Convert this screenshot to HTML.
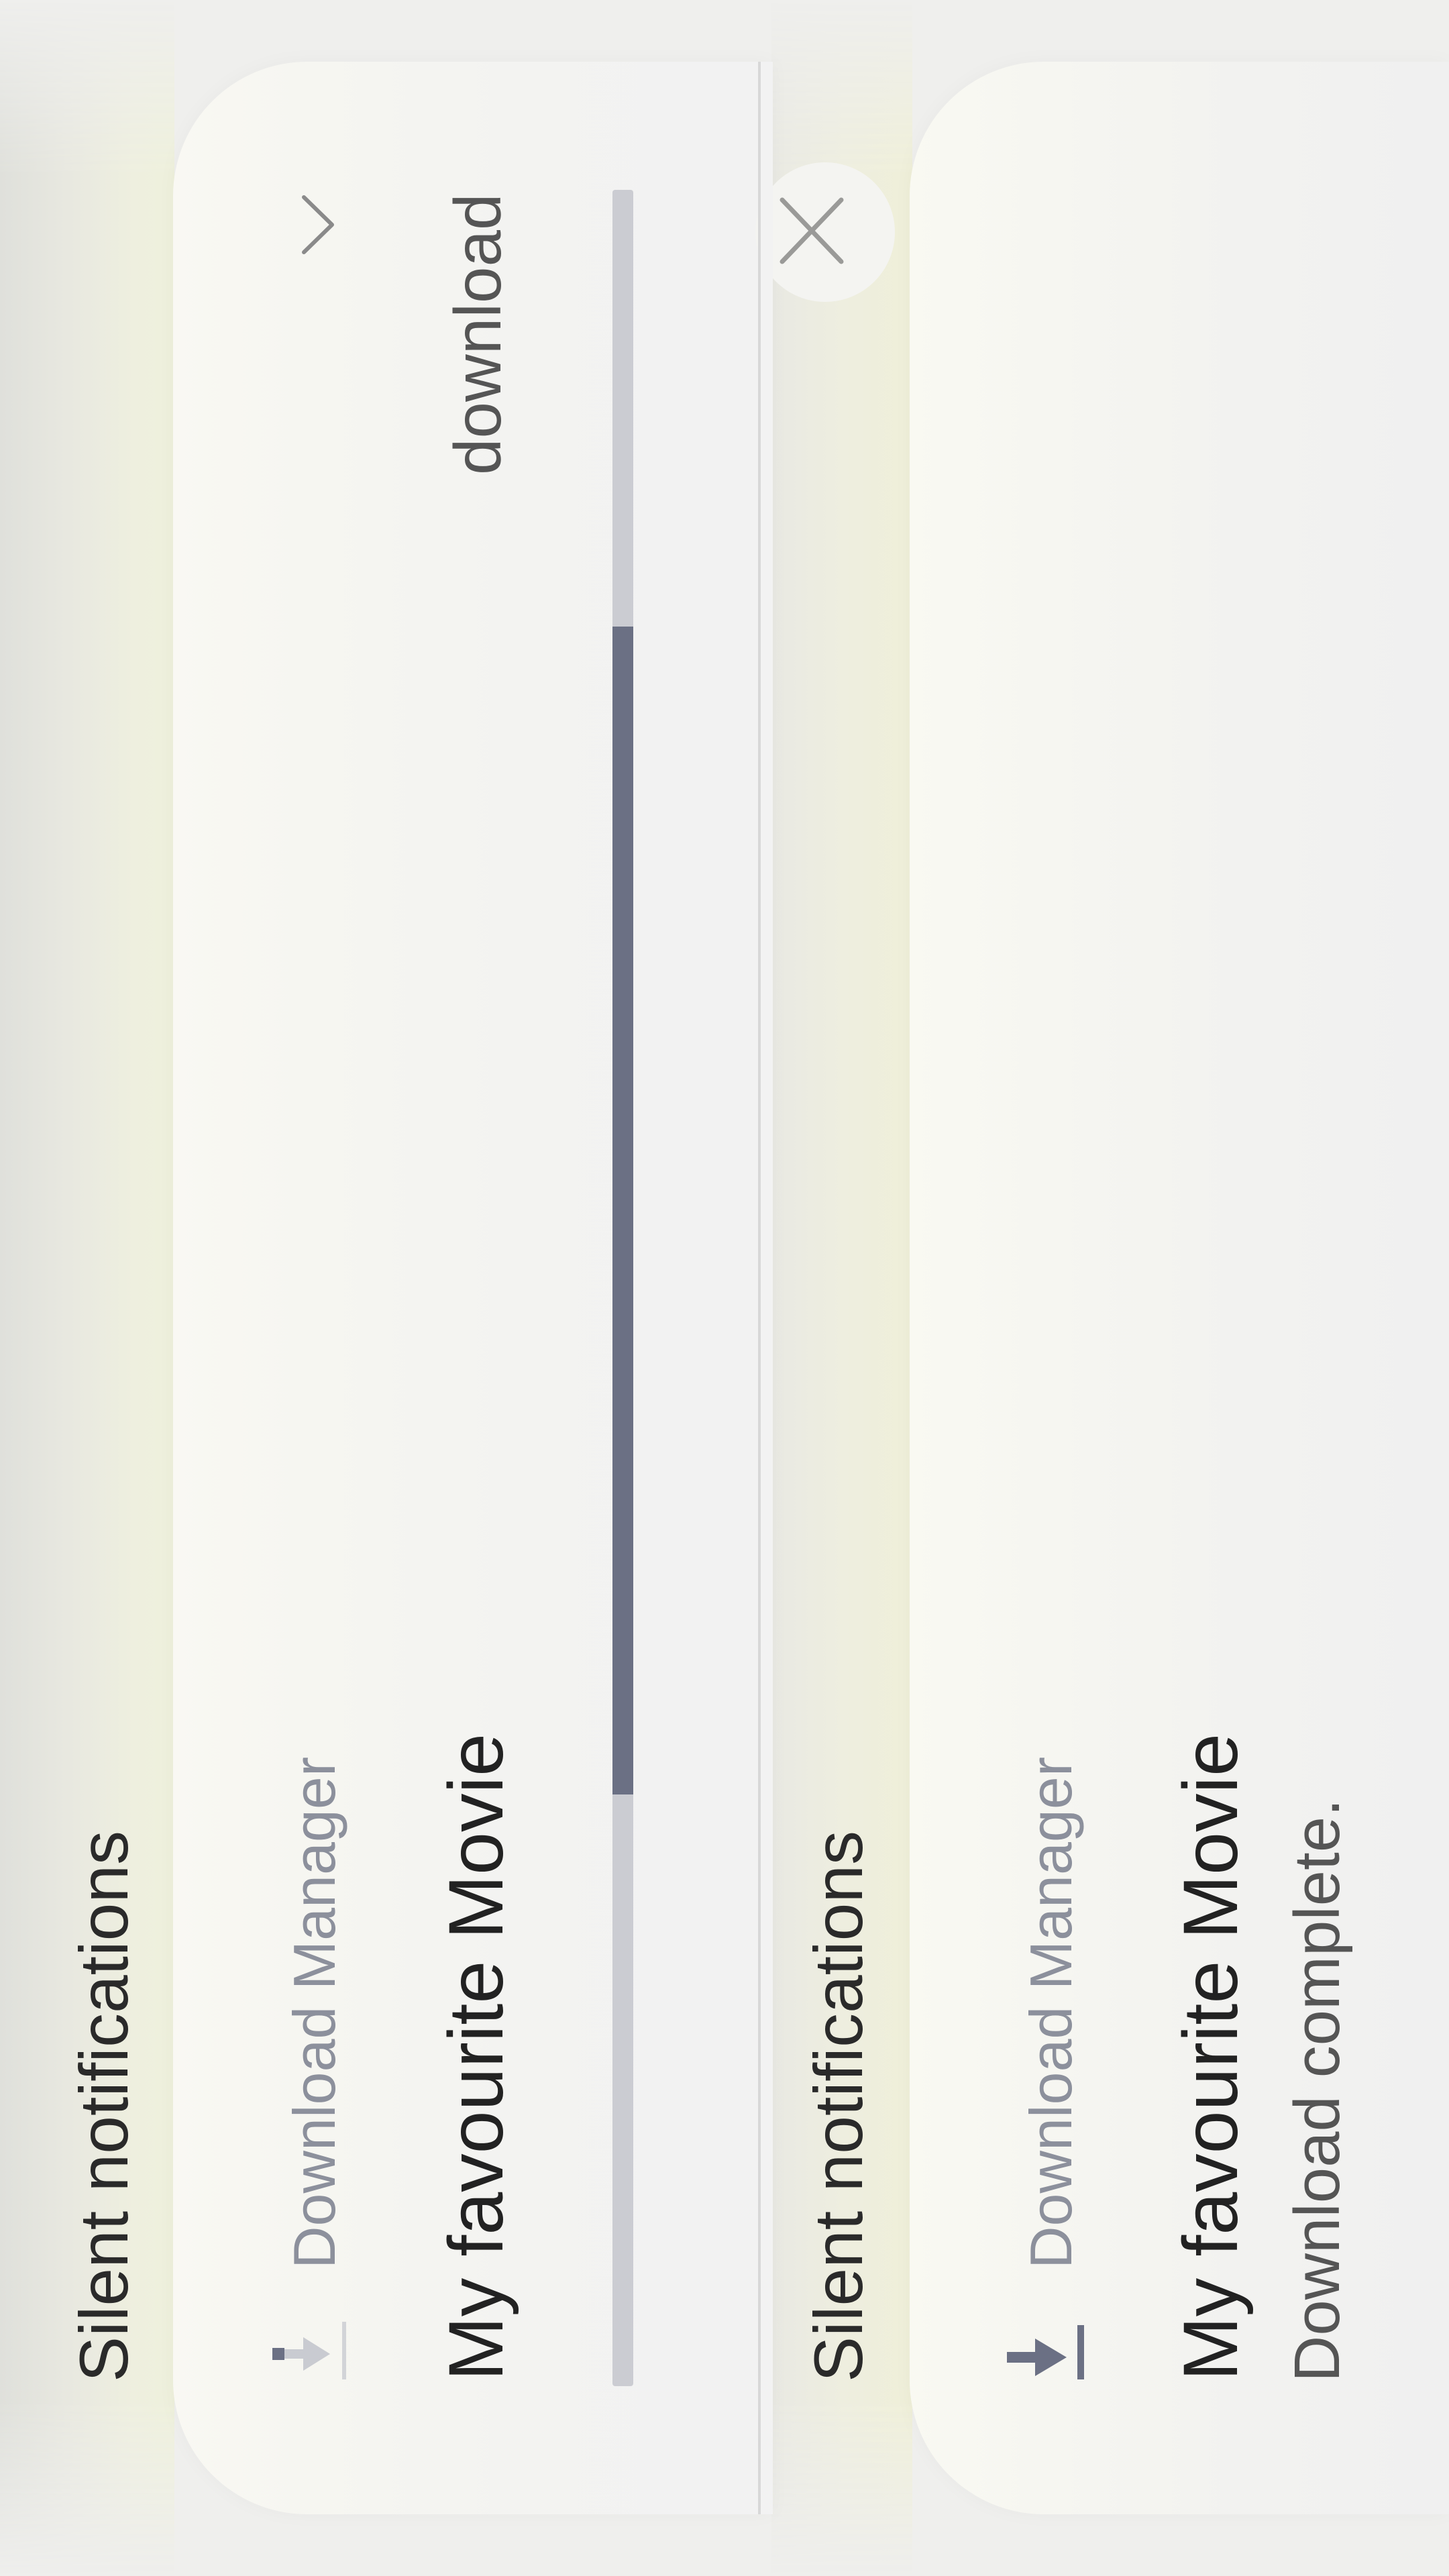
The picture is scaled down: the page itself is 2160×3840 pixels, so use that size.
<!DOCTYPE html>
<html><head><meta charset="utf-8"><style>
html,body{margin:0;padding:0;}
body{width:2160px;height:3840px;position:relative;overflow:hidden;background:#efefed;font-family:"Liberation Sans",sans-serif;}
.abs{position:absolute;}
.rt{position:absolute;transform:rotate(-90deg);transform-origin:left top;white-space:nowrap;line-height:1;}
</style></head><body>
<!-- background column strips -->
<div class="abs" style="left:0;top:0;width:260px;height:3840px;background:linear-gradient(90deg,#dfe0db 0,#e8e8e0 100px,#eeefdf 200px,#eef0dc 258px);-webkit-mask-image:linear-gradient(180deg,transparent 0,#000 260px,#000 3580px,transparent 3840px);mask-image:linear-gradient(180deg,transparent 0,#000 260px,#000 3580px,transparent 3840px);"></div>
<div class="abs" style="left:1150px;top:0;width:210px;height:3840px;background:linear-gradient(90deg,#e9e9e3 0,#eeeedf 110px,#efefd9 206px);-webkit-mask-image:linear-gradient(180deg,transparent 0,#000 260px,#000 3580px,transparent 3840px);mask-image:linear-gradient(180deg,transparent 0,#000 260px,#000 3580px,transparent 3840px);"></div>

<!-- card 1 -->
<div class="abs" style="left:258px;top:92px;width:894px;height:3656px;border-radius:200px 0 0 200px;background:linear-gradient(90deg,#f9f8f3 0,#f6f6f1 200px,#f3f3f1 500px,#f2f2f2 894px);box-shadow:0 0 30px rgba(0,0,0,0.03);"></div>

<!-- card 2 -->
<div class="abs" style="left:1356px;top:92px;width:804px;height:3656px;border-radius:200px 0 0 200px;background:linear-gradient(90deg,#f9f9f2 0,#f6f6f1 200px,#f2f2f0 500px,#f0f0f0 804px);box-shadow:0 0 30px rgba(0,0,0,0.03);"></div>

<!-- close button -->
<div class="abs" style="left:1126px;top:242px;width:208px;height:208px;border-radius:50%;background:#f4f4f1;"></div>
<div class="abs" style="left:1134px;top:92px;width:18px;height:3656px;background:#f2f2f2;"></div>
<div class="abs" style="left:1130px;top:92px;width:4px;height:3656px;background:#d8d8d8;"></div>
<svg class="abs" style="left:0;top:0" width="2160" height="3840">
  <path d="M1166 298 L1254 390 M1254 298 L1166 390" stroke="#9a9a98" stroke-width="7" fill="none" stroke-linecap="round"/>
  <path d="M453 294 L495 335 L453 376" stroke="#8a8a8a" stroke-width="6" fill="none" stroke-linecap="round" stroke-linejoin="round"/>
  <rect x="913" y="283" width="31" height="3274" rx="4" fill="#cbccd2"/>
  <rect x="913" y="934" width="31" height="1741" fill="#6b7084"/>
  <rect x="406" y="3500" width="18" height="18" fill="#6b7084"/>
  <rect x="424" y="3502" width="36" height="14" fill="#c9cbd1"/>
  <polygon points="452,3484 492,3509 452,3534" fill="#c9cbd1"/>
  <rect x="510" y="3461" width="6" height="86" fill="#d2d4d8"/>
  <rect x="1501" y="3506" width="50" height="16" fill="#6b7084"/>
  <polygon points="1543,3486 1590,3514 1543,3542" fill="#6b7084"/>
  <rect x="1606" y="3466" width="10" height="81" fill="#6b7084"/>
</svg>

<!-- card 1 text -->
<div class="rt" style="left:104px;top:3551px;font-size:102px;color:#2a2a2a;">Silent notifications</div>
<div class="rt" style="left:425px;top:3382px;font-size:88px;color:#8c909c;">Download Manager</div>
<div class="rt" style="left:653px;top:3549px;font-size:115px;color:#222;">My favourite Movie</div>
<div class="rt" style="left:663px;top:708px;font-size:98px;color:#555;">download</div>

<!-- card 2 text -->
<div class="rt" style="left:1199px;top:3551px;font-size:102px;color:#2a2a2a;">Silent notifications</div>
<div class="rt" style="left:1523px;top:3382px;font-size:88px;color:#8c909c;">Download Manager</div>
<div class="rt" style="left:1748px;top:3549px;font-size:115px;color:#222;">My favourite Movie</div>
<div class="rt" style="left:1916px;top:3551px;font-size:96px;color:#555;">Download complete.</div>
</body></html>
